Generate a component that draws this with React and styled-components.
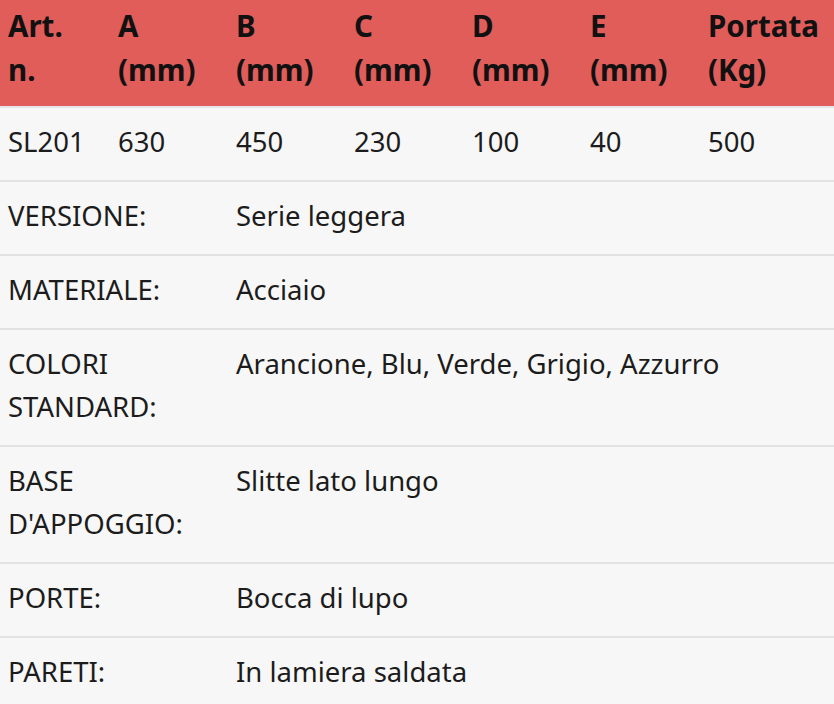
import React from "react";
import styled, { createGlobalStyle } from "styled-components";

const GlobalStyle = createGlobalStyle`
  html, body {
    margin: 0;
    padding: 0;
    background-color: #f7f7f7;
  }
  body {
    font-family: "Noto Sans", "Open Sans", sans-serif;
    color: #1a1a1a;
  }
`;

const Table = styled("table")`
  width: 834px;
  border-collapse: collapse;
  table-layout: fixed;
  font-size: 27.5px;
  line-height: 43px;
`;

const HeadRow = styled("tr")`
  background-color: #e05d5a;
  border-bottom: 2px solid #e6e6ea;
`;

const HeadCell = styled("th")`
  text-align: left;
  vertical-align: top;
  font-weight: 700;
  font-size: 29.5px;
  color: #111;
  padding: 4px 8px 14px;
  line-height: 44px;
  white-space: nowrap;
`;

const Row = styled("tr")`
  border-bottom: 2px solid #e2e2e2;
`;

const Cell = styled("td")`
  vertical-align: top;
  padding: 12px 8px 17px;
  color: #1c1c1c;
  font-weight: 400;
`;

const columns = [
  ["Art.", "n."],
  ["A", "(mm)"],
  ["B", "(mm)"],
  ["C", "(mm)"],
  ["D", "(mm)"],
  ["E", "(mm)"],
  ["Portata", "(Kg)"],
];

const values = ["SL201", "630", "450", "230", "100", "40", "500"];

const specs = [
  ["VERSIONE:", "Serie leggera"],
  ["MATERIALE:", "Acciaio"],
  ["COLORI STANDARD:", "Arancione, Blu, Verde, Grigio, Azzurro"],
  ["BASE D'APPOGGIO:", "Slitte lato lungo"],
  ["PORTE:", "Bocca di lupo"],
  ["PARETI:", "In lamiera saldata"],
];

const widths = [110, 118, 118, 118, 118, 118, 134];

export default function App() {
  return (
    <>
      <GlobalStyle />
      <Table>
        <colgroup>
          {widths.map((w, i) => (
            <col key={i} style={{ width: w }} />
          ))}
        </colgroup>
        <thead>
          <HeadRow>
            {columns.map(([top, bottom]) => (
              <HeadCell key={top}>
                {top}
                <br />
                {bottom}
              </HeadCell>
            ))}
          </HeadRow>
        </thead>
        <tbody>
          <Row>
            {values.map((v) => (
              <Cell key={v}>{v}</Cell>
            ))}
          </Row>
          {specs.map(([label, value]) => (
            <Row key={label}>
              <Cell colSpan={2}>{label}</Cell>
              <Cell colSpan={5}>{value}</Cell>
            </Row>
          ))}
        </tbody>
      </Table>
    </>
  );
}
